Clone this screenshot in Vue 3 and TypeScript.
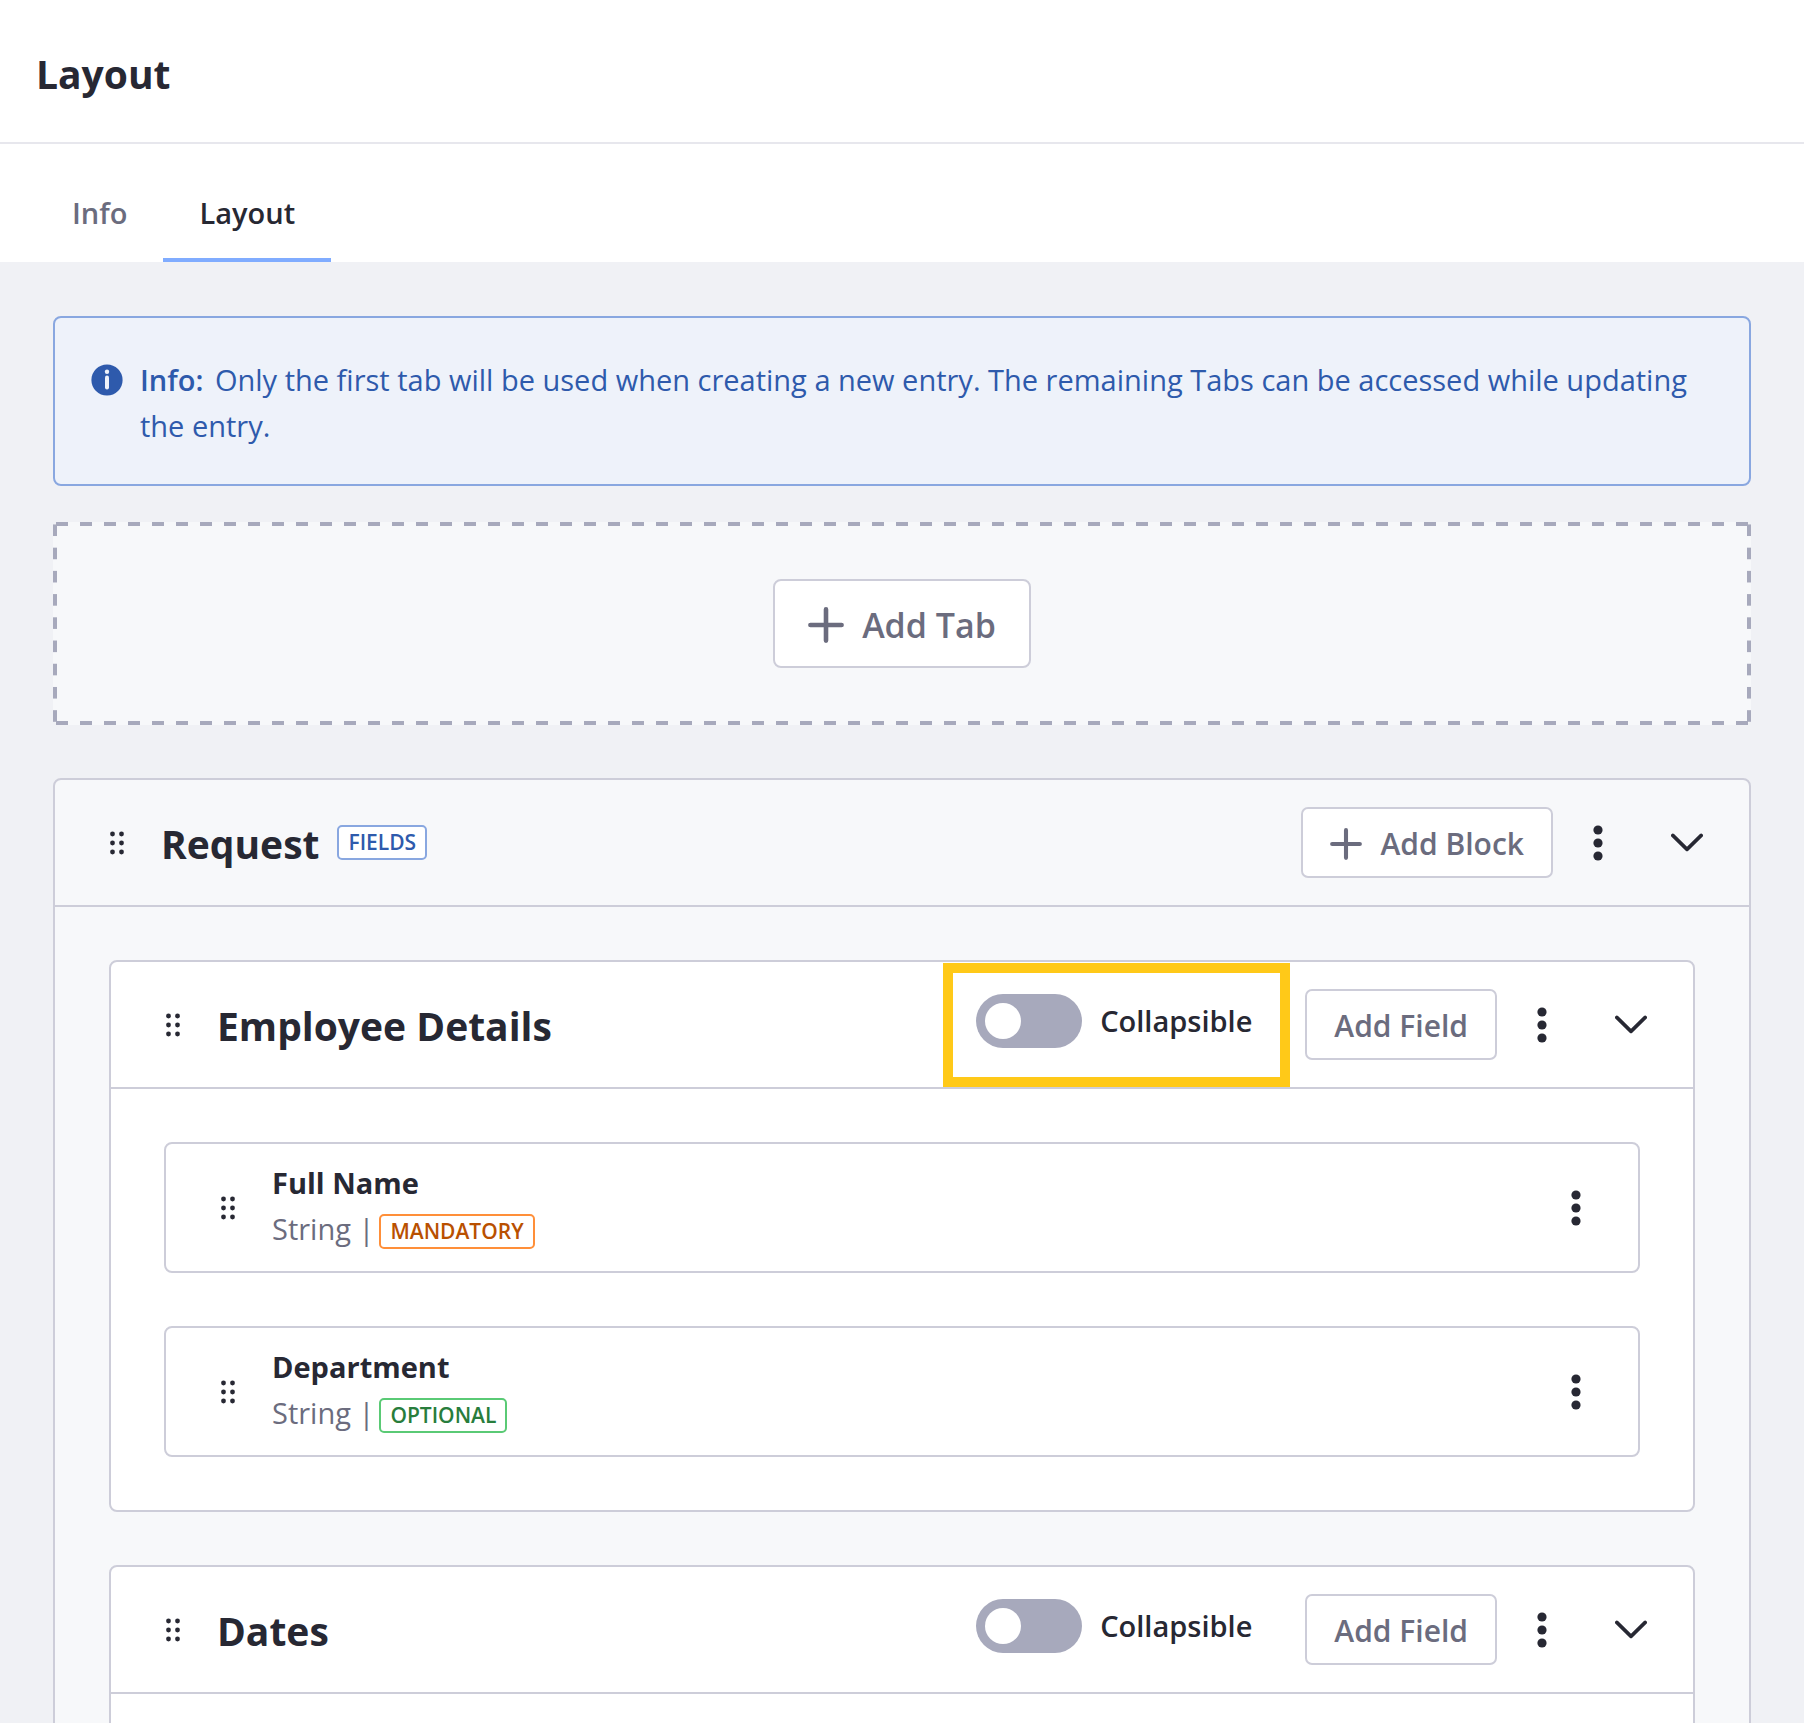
<script setup lang="ts">
import { ref } from 'vue'

interface Field {
  name: string
  type: string
  rule: 'mandatory' | 'optional'
}

interface Block {
  id: string
  title: string
  collapsible: boolean
  highlighted: boolean
  fields: Field[]
}

const tabs = ['Info', 'Layout']
const activeTab = ref('Layout')

const blocks = ref<Block[]>([
  {
    id: 'employee-details',
    title: 'Employee Details',
    collapsible: false,
    highlighted: true,
    fields: [
      { name: 'Full Name', type: 'String', rule: 'mandatory' },
      { name: 'Department', type: 'String', rule: 'optional' },
    ],
  },
  { id: 'dates', title: 'Dates', collapsible: false, highlighted: false, fields: [] },
])

const dotRows = [5, 14, 23]
</script>

<template>
  <div class="page">
    <header class="page-header">
      <h1 class="heading">Layout</h1>
    </header>

    <nav class="tabs" role="tablist">
      <button
        v-for="tab in tabs"
        :key="tab"
        type="button"
        role="tab"
        class="tab"
        :class="{ active: tab === activeTab }"
        :aria-selected="tab === activeTab"
        @click="activeTab = tab"
      >
        {{ tab }}
      </button>
    </nav>

    <main class="content">
      <div class="alert" role="status">
        <svg class="alert-icon" viewBox="0 0 32 32" aria-hidden="true">
          <circle cx="16" cy="16" r="15.6" fill="#2e5aac" />
          <circle cx="16" cy="7.8" r="2.2" fill="#eef2fa" />
          <rect x="14" y="11.6" width="4" height="14" rx="2" fill="#eef2fa" />
        </svg>
        <p class="alert-text">
          <strong>Info:</strong> Only the first tab will be used when creating a new entry. The
          remaining Tabs can be accessed while updating the entry.
        </p>
      </div>

      <div class="dropzone">
        <button type="button" class="btn btn-large">
          <svg class="plus" viewBox="0 0 36 36" aria-hidden="true">
            <path d="M18 2.4v31.2M2.4 18h31.2" />
          </svg>
          Add Tab
        </button>
      </div>

      <section class="card tab-card">
        <div class="card-header">
          <svg class="handle" viewBox="0 0 16 28" aria-hidden="true">
            <template v-for="y in dotRows" :key="y">
              <circle cx="3.5" :cy="y" r="2.4" />
              <circle cx="12.5" :cy="y" r="2.4" />
            </template>
          </svg>
          <h2 class="heading">Request</h2>
          <span class="badge fields">FIELDS</span>
          <div class="actions">
            <button type="button" class="btn">
              <svg class="plus" viewBox="0 0 36 36" aria-hidden="true">
                <path d="M18 2.4v31.2M2.4 18h31.2" />
              </svg>
              Add Block
            </button>
            <button type="button" class="icon-btn" aria-label="Tab actions">
              <svg class="kebab" viewBox="0 0 10 36" aria-hidden="true">
                <circle cx="5" cy="5" r="4.6" />
                <circle cx="5" cy="18" r="4.6" />
                <circle cx="5" cy="31" r="4.6" />
              </svg>
            </button>
            <button type="button" class="icon-btn" aria-label="Collapse tab">
              <svg class="chevron" viewBox="0 0 32 20" aria-hidden="true">
                <path d="M1.8 2.4 16 16.4 30.2 2.4" />
              </svg>
            </button>
          </div>
        </div>

        <div class="card-body">
          <section v-for="block in blocks" :key="block.id" class="card block-card">
            <div class="card-header">
              <svg class="handle" viewBox="0 0 16 28" aria-hidden="true">
                <template v-for="y in dotRows" :key="y">
                  <circle cx="3.5" :cy="y" r="2.4" />
                  <circle cx="12.5" :cy="y" r="2.4" />
                </template>
              </svg>
              <h3 class="heading">{{ block.title }}</h3>
              <div class="actions">
                <label class="toggle" :class="{ highlighted: block.highlighted }">
                  <input v-model="block.collapsible" type="checkbox" class="switch" />
                  <span>Collapsible</span>
                </label>
                <button type="button" class="btn">Add Field</button>
                <button type="button" class="icon-btn" aria-label="Block actions">
                  <svg class="kebab" viewBox="0 0 10 36" aria-hidden="true">
                    <circle cx="5" cy="5" r="4.6" />
                    <circle cx="5" cy="18" r="4.6" />
                    <circle cx="5" cy="31" r="4.6" />
                  </svg>
                </button>
                <button type="button" class="icon-btn" aria-label="Collapse block">
                  <svg class="chevron" viewBox="0 0 32 20" aria-hidden="true">
                    <path d="M1.8 2.4 16 16.4 30.2 2.4" />
                  </svg>
                </button>
              </div>
            </div>

            <div class="card-body">
              <article v-for="field in block.fields" :key="field.name" class="card field">
                <svg class="handle" viewBox="0 0 16 28" aria-hidden="true">
                  <template v-for="y in dotRows" :key="y">
                    <circle cx="3.5" :cy="y" r="2.4" />
                    <circle cx="12.5" :cy="y" r="2.4" />
                  </template>
                </svg>
                <div class="field-text">
                  <h4 class="field-name">{{ field.name }}</h4>
                  <p class="field-meta">
                    <span>{{ field.type }} |</span>
                    <span class="badge" :class="field.rule">{{ field.rule.toUpperCase() }}</span>
                  </p>
                </div>
                <div class="actions">
                  <button type="button" class="icon-btn" aria-label="Field actions">
                    <svg class="kebab" viewBox="0 0 10 36" aria-hidden="true">
                      <circle cx="5" cy="5" r="4.6" />
                      <circle cx="5" cy="18" r="4.6" />
                      <circle cx="5" cy="31" r="4.6" />
                    </svg>
                  </button>
                </div>
              </article>
            </div>
          </section>
        </div>
      </section>
    </main>
  </div>
</template>

<style>
body {
  margin: 0;
}
</style>

<style scoped>
.page {
  display: flex;
  flex-direction: column;
  height: 100vh;
  overflow: hidden;
  background: #f0f1f5;
  color: #272833;
  font-family: 'Open Sans', 'Noto Sans', sans-serif;
  font-size: 29px;
  line-height: 46px;
}

.page *,
.page *::before,
.page *::after {
  box-sizing: border-box;
}

h1,
h2,
h3,
h4,
p {
  margin: 0;
}

button {
  margin: 0;
  font: inherit;
  cursor: pointer;
}

.heading {
  font-size: 39px;
  line-height: 56px;
  font-weight: 700;
}

.page-header {
  flex: none;
  padding: 46px 36px 40px;
  border-bottom: 2px solid #e7e7ed;
  background: #fff;
}

.tabs {
  display: flex;
  flex: none;
  padding: 0 36px;
  background: #fff;
}

.tab {
  padding: 46px 36px 22px;
  border: 0;
  border-bottom: 4px solid transparent;
  background: none;
  color: #6b6c7e;
  font-weight: 600;
}

.tab.active {
  border-color: #80acff;
  color: #272833;
}

.content {
  flex: 1;
  min-height: 0;
  overflow: hidden;
  padding: 54px 53px 0;
}

.alert {
  display: flex;
  gap: 17px;
  padding: 39px 36px 35px;
  border: 2px solid #89a7e0;
  border-radius: 8px;
  background: #eef2fa;
  color: #2e5aac;
}

.alert-icon {
  flex: none;
  width: 32px;
  height: 32px;
  margin-top: 7px;
}

.alert-text strong {
  margin-right: 4px;
  font-weight: 600;
}

.dropzone {
  position: relative;
  display: flex;
  justify-content: center;
  margin-top: 36px;
  padding: 57px;
  border-radius: 8px;
  background: #f7f8fa;
}

/* Long dashes, spread evenly along each edge. */
.dropzone::before,
.dropzone::after {
  content: '';
  position: absolute;
  pointer-events: none;
}

.dropzone::before {
  inset: 0 -3px;
  background:
    linear-gradient(90deg, transparent 25%, #a7a9bc 25% 75%, transparent 75%) top / 24px 4px round no-repeat,
    linear-gradient(90deg, transparent 25%, #a7a9bc 25% 75%, transparent 75%) bottom / 24px 4px round no-repeat;
}

.dropzone::after {
  inset: -3px 0;
  background:
    linear-gradient(transparent 25%, #a7a9bc 25% 75%, transparent 75%) left / 4px 24px no-repeat round,
    linear-gradient(transparent 25%, #a7a9bc 25% 75%, transparent 75%) right / 4px 24px no-repeat round;
}

.btn {
  display: inline-flex;
  align-items: center;
  gap: 18px;
  height: 71px;
  padding: 2px 27px 0;
  border: 2px solid #cdcdd9;
  border-radius: 7px;
  background: #fff;
  color: #6b6c7e;
  font-size: 30px;
  font-weight: 600;
  white-space: nowrap;
}

.btn-large {
  height: 89px;
  padding: 2px 33px 0;
  border-radius: 8px;
  font-size: 34px;
}

.plus {
  width: 32px;
  height: 32px;
  fill: none;
  stroke: currentColor;
  stroke-width: 4.6;
  stroke-linecap: round;
}

.btn-large .plus {
  width: 36px;
  height: 36px;
}

.card {
  border: 2px solid #cdcdd9;
  border-radius: 8px;
  background: #fff;
}

.tab-card {
  margin-top: 53px;
  background: #f7f8fa;
}

.card-header {
  display: flex;
  align-items: center;
  height: 127px;
  padding: 0 18px 0 54px;
  border-bottom: 2px solid #cdcdd9;
}

.card-header .heading {
  padding-top: 3px;
}

.card-body {
  display: flex;
  flex-direction: column;
  gap: 53px;
  padding: 53px;
}

.tab-card > .card-body {
  padding: 53px 54px;
}

.handle {
  flex: none;
  width: 16px;
  height: 28px;
  margin-right: 36px;
  fill: #272833;
}

.actions {
  display: flex;
  align-items: center;
  margin-left: auto;
}

.icon-btn {
  display: flex;
  align-items: center;
  justify-content: center;
  width: 89px;
  height: 71px;
  padding: 0;
  border: 0;
  background: none;
}

.kebab {
  width: 10px;
  height: 36px;
  fill: #272833;
}

.chevron {
  width: 32px;
  height: 20px;
  fill: none;
  stroke: #272833;
  stroke-width: 3.6;
  stroke-linecap: round;
  stroke-linejoin: round;
}

.badge {
  display: inline-flex;
  align-items: center;
  height: 35px;
  padding: 0 9px;
  border: 2px solid;
  border-radius: 5px;
  background: #fff;
  font-size: 21px;
  line-height: 31px;
  font-weight: 600;
}

.badge.fields {
  margin-left: 18px;
  border-color: #89a7e0;
  color: #2e5aac;
}

.badge.mandatory {
  border-color: #ff8f39;
  color: #b95000;
}

.badge.optional {
  border-color: #5aca75;
  color: #287d3c;
}

.toggle {
  display: flex;
  align-items: center;
  gap: 18px;
  height: 124px;
  margin-right: 15px;
  padding: 0 28px 8px 23px;
  border: 10px solid transparent;
  font-weight: 600;
}

.toggle.highlighted {
  border-color: #ffc918;
}

.switch {
  appearance: none;
  flex: none;
  width: 106px;
  height: 54px;
  margin: 0;
  padding: 9px;
  border-radius: 27px;
  background: #a7a9bc;
  cursor: pointer;
}

.switch::before {
  content: '';
  display: block;
  width: 36px;
  height: 36px;
  border-radius: 50%;
  background: #fff;
}

.switch:checked {
  background: #0b5fff;
}

.switch:checked::before {
  margin-left: auto;
}

.field {
  display: flex;
  align-items: center;
  height: 131px;
  padding: 0 18px 0 54px;
}

.field-text {
  padding-bottom: 3px;
}

.field-name {
  font-size: 29px;
  font-weight: 700;
}

.field-meta {
  display: flex;
  align-items: center;
  gap: 5px;
  height: 46px;
  color: #6b6c7e;
}

.field-meta .badge {
  margin-top: 4px;
}
</style>
